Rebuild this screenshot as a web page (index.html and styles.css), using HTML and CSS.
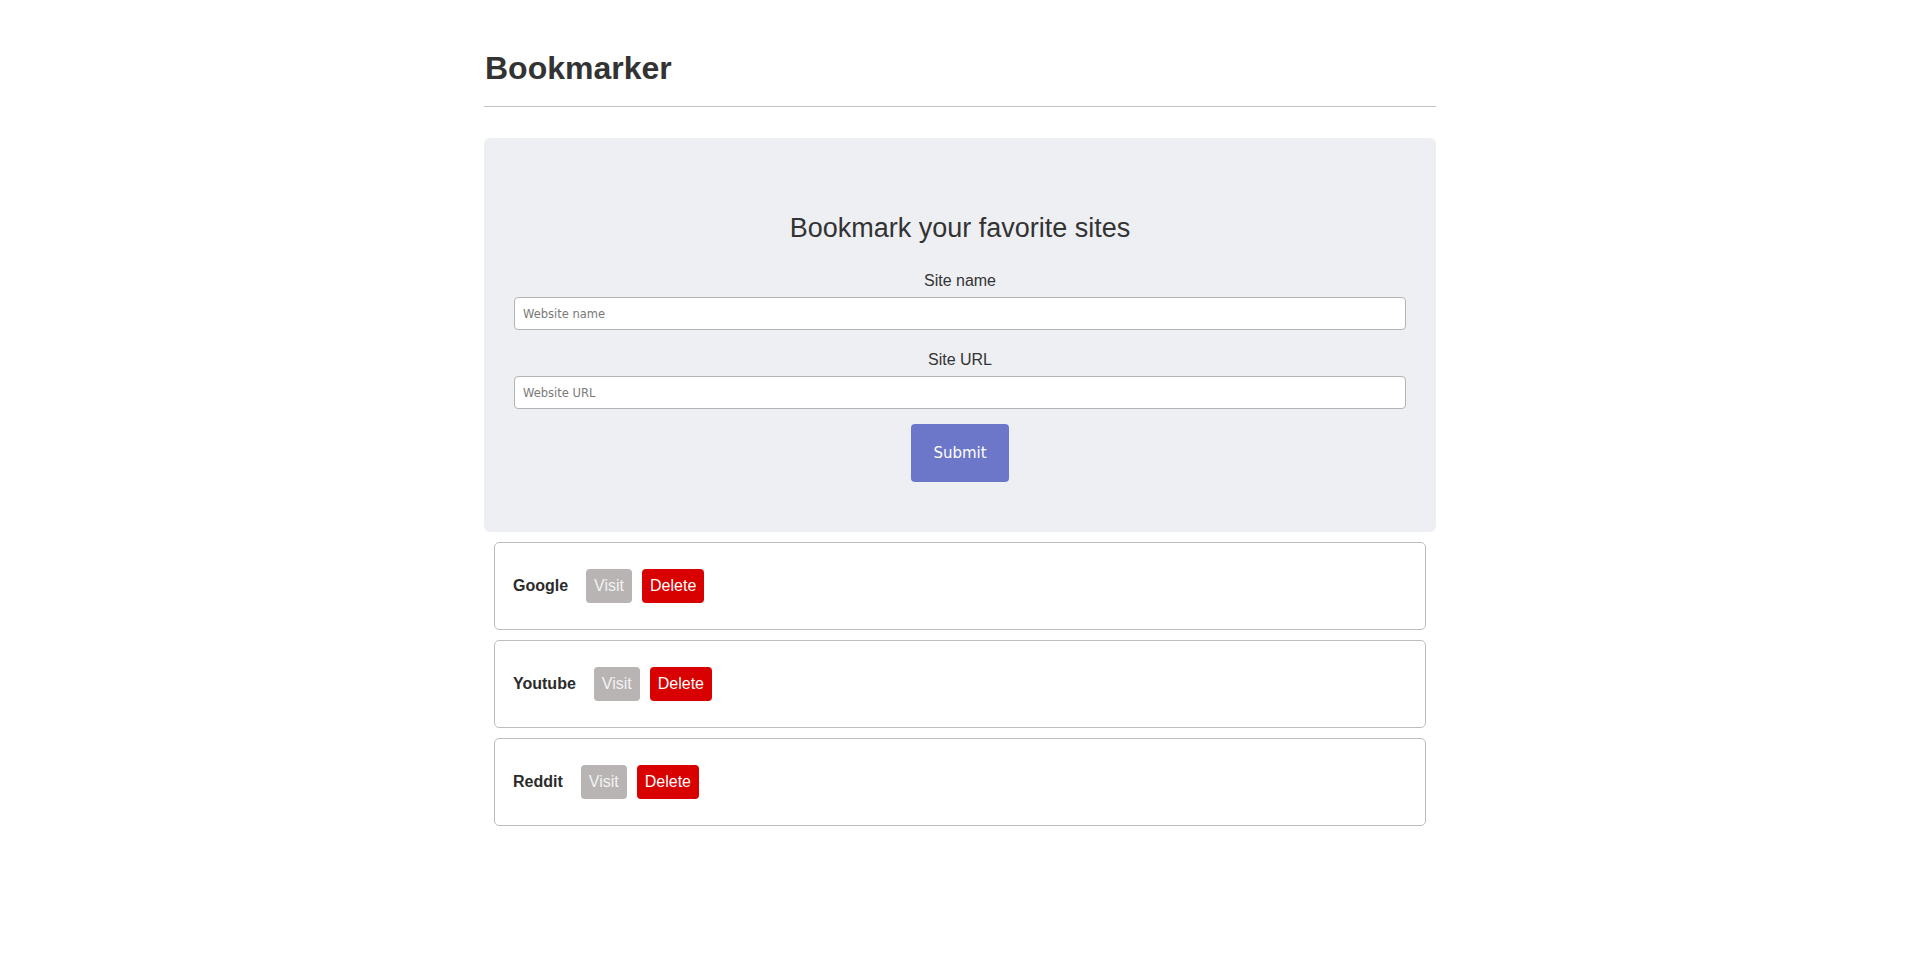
FILE: index.html
```html
<!DOCTYPE html>
<html lang="en">
<head>
<meta charset="utf-8">
<title>Bookmarker</title>
<link rel="stylesheet" href="styles.css">
</head>
<body>
<div class="container">
  <h1 class="brand">Bookmarker</h1>
  <hr class="rule">
  <div class="panel">
    <h2 class="panel-title">Bookmark your favorite sites</h2>
    <form class="form">
      <label class="label" for="siteName">Site name</label>
      <input class="input" id="siteName" type="text" placeholder="Website name">
      <label class="label label-second" for="siteUrl">Site URL</label>
      <input class="input" id="siteUrl" type="text" placeholder="Website URL">
      <button class="submit" type="button">Submit</button>
    </form>
  </div>
  <div class="list">
    <div class="card">
      <span class="name">Google</span>
      <a class="btn btn-visit">Visit</a>
      <a class="btn btn-delete">Delete</a>
    </div>
    <div class="card">
      <span class="name">Youtube</span>
      <a class="btn btn-visit">Visit</a>
      <a class="btn btn-delete">Delete</a>
    </div>
    <div class="card">
      <span class="name">Reddit</span>
      <a class="btn btn-visit">Visit</a>
      <a class="btn btn-delete">Delete</a>
    </div>
  </div>
</div>
</body>
</html>
```

FILE: styles.css
```css
* {
  box-sizing: border-box;
}

html, body {
  margin: 0;
  padding: 0;
  background: #ffffff;
}

body {
  font-family: "Liberation Sans", Arial, sans-serif;
  color: #333333;
}

.container {
  width: 952px;
  margin: 0 auto;
  padding-top: 51px;
}

.brand {
  margin: 0 0 21px 1px;
  font-size: 32px;
  line-height: 34px;
  font-weight: 700;
  color: #333333;
}

.rule {
  margin: 0 0 31px 0;
  border: 0;
  border-top: 1px solid #c4c4c4;
  height: 0;
}

.panel {
  background: #eeeff3;
  border-radius: 6px;
  padding: 74px 30px 50px;
}

.panel-title {
  margin: 0 0 28px 0;
  text-align: center;
  font-size: 27px;
  line-height: 32px;
  font-weight: 400;
  color: #333333;
}

.form {
  display: flex;
  flex-direction: column;
  align-items: stretch;
}

.label {
  display: block;
  text-align: center;
  font-size: 16px;
  line-height: 18px;
  color: #333333;
  margin-bottom: 7px;
}

.label-second {
  margin-top: 21px;
}

.input {
  display: block;
  width: 100%;
  height: 33px;
  padding: 0 8px;
  border: 1px solid #b3b3b3;
  border-radius: 4px;
  background: #ffffff;
  font-family: "DejaVu Sans", Verdana, sans-serif;
  font-size: 11.5px;
  color: #333333;
  outline: none;
}

.input::placeholder {
  color: #7a7a7a;
}

.submit {
  align-self: center;
  margin-top: 15px;
  width: 98px;
  height: 58px;
  padding: 0;
  border: 0;
  border-radius: 4px;
  background: #6c77c9;
  color: #ffffff;
  font-family: "DejaVu Sans", Verdana, sans-serif;
  font-size: 15px;
  cursor: pointer;
}

.list {
  padding: 10px 10px 0;
  display: flex;
  flex-direction: column;
  gap: 10px;
}

.card {
  display: flex;
  align-items: center;
  padding: 26px 18px 26px;
  border: 1px solid #bdbdbd;
  border-radius: 5px;
  background: #ffffff;
}

.name {
  font-size: 16px;
  font-weight: 700;
  color: #2b2b2b;
  margin-right: 18px;
}

.btn {
  display: inline-block;
  padding: 8px;
  font-size: 16px;
  line-height: 18px;
  border-radius: 4px;
  color: #ffffff;
  cursor: pointer;
}

.btn-visit {
  background: #b8b4b4;
  color: #f2f2f2;
  margin-right: 10px;
}

.btn-delete {
  background: #d90000;
}
```
